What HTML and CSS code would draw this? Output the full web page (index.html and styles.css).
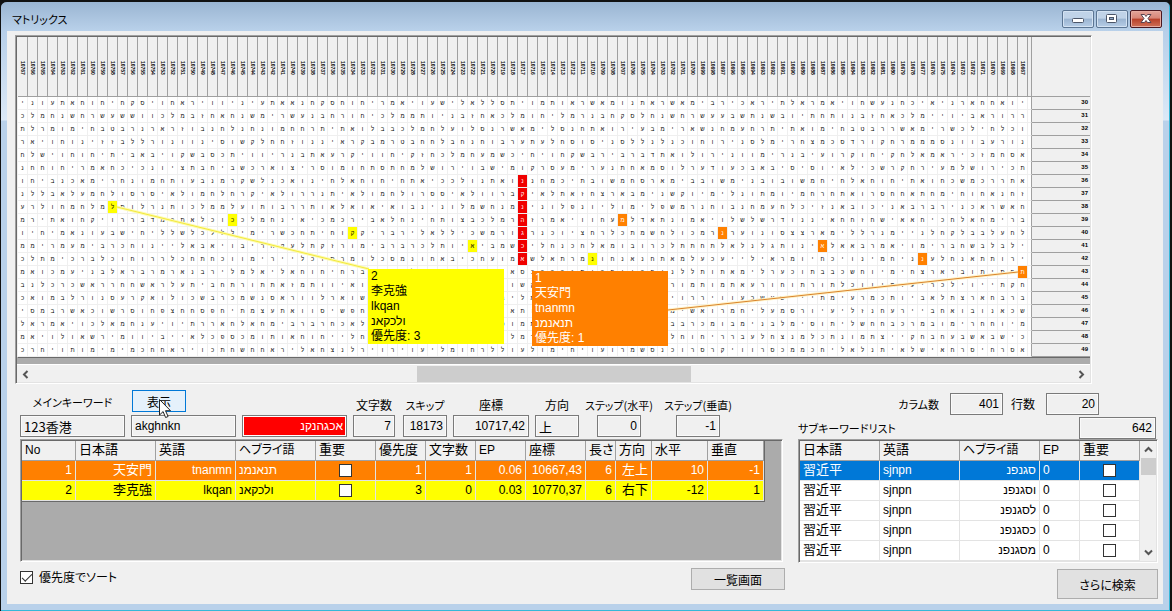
FILE: index.html
```html
<!DOCTYPE html>
<html lang="ja">
<head>
<meta charset="utf-8">
<title>マトリックス</title>
<link rel="stylesheet" href="styles.css">
</head>
<body>
<div class="window">
  <header class="titlebar">
    <h1 class="title">マトリックス</h1>
    <div class="win-buttons">
      <button class="win-btn" type="button" aria-label="最小化"><svg width="30" height="16" viewBox="0 0 30 16"><rect x="9.500" y="7.500" width="11" height="4" rx="1" fill="#fff" stroke="#4b5568"/></svg></button>
      <button class="win-btn" type="button" aria-label="最大化"><svg width="30" height="16" viewBox="0 0 30 16"><rect x="9.500" y="3.500" width="10" height="8" rx="1" fill="#fff" stroke="#4b5568"/><rect x="12.500" y="6.500" width="4" height="2" fill="#8fa9c8" stroke="#4b5568"/></svg></button>
      <button class="win-btn close" type="button" aria-label="閉じる"><svg width="30" height="16" viewBox="0 0 30 16"><path d="M10 3.500h3.500l1.500 2 1.500-2H20L17 7.500l3 4h-3.500L15 9.500l-1.500 2H10l3-4z" fill="#fff" stroke="#5a4450"/></svg></button>
    </div>
  </header>

  <main class="client">
    <section class="matrix-panel">
      <div class="matrix-body">
        <table class="matrix" id="matrix"></table>
        <svg class="links" aria-hidden="true">
          <path d="M100 170L352 232" stroke="#fdfbb0" stroke-width="3"/>
          <path d="M100 170L352 232" stroke="#f2e83c"/>
          <path d="M651 273L1001 235" stroke="#fff3c8" stroke-width="3"/>
          <path d="M651 273L1001 235" stroke="#d9832c"/>
        </svg>
        <div class="callout yellow">
          <div>2</div><div>李克強</div><div>lkqan</div><div><bdi>ולכקאנ</bdi></div><div>優先度: 3</div>
        </div>
        <div class="callout orange">
          <div>1</div><div>天安門</div><div>tnanmn</div><div><bdi>תנאנמנ</bdi></div><div>優先度: 1</div>
        </div>
      </div>
      <div class="hscroll">
        <button type="button" class="arrow" aria-label="左へ"><svg width="17" height="17" viewBox="0 0 17 17"><path d="M10.500 5L7 8.500l3.500 3.500" fill="none" stroke="#555" stroke-width="2"/></svg></button>
        <div class="htrack"><div class="hthumb"></div></div>
        <button type="button" class="arrow" aria-label="右へ"><svg width="17" height="17" viewBox="0 0 17 17"><path d="M6.500 5L10 8.500 6.500 12" fill="none" stroke="#555" stroke-width="2"/></svg></button>
      </div>
    </section>

    <div class="lower">
      <section class="left">
        <form class="fields">
          <div class="field name"><label class="kana raised" for="f1">メインキーワード</label><input class="jp" id="f1" value="123香港" readonly></div>
          <div class="field name">
            <div class="show-wrap"><button type="button" class="btn show">表示</button>
              <svg class="pointer" width="13" height="20" viewBox="0 0 13 20"><path d="M.5.500v15.500l3.600-3.400 2.500 5.900 2.500-1-2.600-5.800h5z" fill="#fff" stroke="#222"/></svg>
            </div>
            <input id="f2" aria-label="英語" value="akghnkn" readonly></div>
          <div class="field name"><input class="hot" id="f3" aria-label="ヘブライ語" dir="rtl" value="אכגהנקנ" readonly></div>
          <div class="field count"><label for="f4">文字数</label><input class="num" id="f4" value="7" readonly></div>
          <div class="field small skip"><label class="kana" for="f5">スキップ</label><input class="num" id="f5" value="18173" readonly></div>
          <div class="field coord"><label for="f6">座標</label><input class="num" id="f6" value="10717,42" readonly></div>
          <div class="field small"><label for="f7">方向</label><input class="jp" id="f7" value="上" readonly></div>
          <div class="field small step"><label class="kana" for="f8">ステップ(水平)</label><input class="num" id="f8" value="0" readonly></div>
          <div class="field small step"><label class="kana" for="f9">ステップ(垂直)</label><input class="num" id="f9" value="-1" readonly></div>
        </form>
        <div class="grid-box results">
          <table class="grid">
            <colgroup><col class="w54"><col class="w80"><col class="w80"><col class="w80"><col class="w60"><col class="w50"><col class="w50"><col class="w50"><col class="w60"><col class="w30"><col class="w36"><col class="w56"><col class="w56"></colgroup>
            <thead><tr><th class="en">No</th><th>日本語</th><th>英語</th><th class="kana">ヘブライ語</th><th>重要</th><th>優先度</th><th>文字数</th><th class="en">EP</th><th>座標</th><th>長さ</th><th>方向</th><th>水平</th><th>垂直</th></tr></thead>
            <tbody>
              <tr class="row-orange"><td class="r">1</td><td class="r jp">天安門</td><td class="r">tnanmn</td><td><bdi>תנאנמנ</bdi></td><td class="c"><input type="checkbox" aria-label="重要 1"></td><td class="r">1</td><td class="r">1</td><td class="r">0.06</td><td class="r">10667,43</td><td class="r">6</td><td class="r jp">左上</td><td class="r">10</td><td class="r">-1</td></tr>
              <tr class="row-yellow"><td class="r">2</td><td class="r jp">李克強</td><td class="r">lkqan</td><td><bdi>ולכקאנ</bdi></td><td class="c"><input type="checkbox" aria-label="重要 2"></td><td class="r">3</td><td class="r">0</td><td class="r">0.03</td><td class="r">10770,37</td><td class="r">6</td><td class="r jp">右下</td><td class="r">-12</td><td class="r">1</td></tr>
            </tbody>
          </table>
        </div>
        <div class="footer">
          <label class="sort"><input type="checkbox" checked>優先度でソート</label>
          <button type="button" class="btn list">一覧画面</button>
        </div>
      </section>

      <section class="right">
        <form class="dims">
          <label class="kana" for="cols">カラム数</label><input class="num" id="cols" value="401" readonly>
          <label for="rows">行数</label><input class="num" id="rows" value="20" readonly>
        </form>
        <div class="sub-head"><label class="kana" for="total">サブキーワードリスト</label><input class="num" id="total" value="642" readonly></div>
        <div class="grid-box subs">
          <table class="grid">
            <colgroup><col class="w80"><col class="w80"><col class="w80"><col class="w40"><col class="w60"></colgroup>
            <thead><tr><th>日本語</th><th>英語</th><th class="kana">ヘブライ語</th><th class="en">EP</th><th>重要</th></tr></thead>
            <tbody>
              <tr class="selected"><td class="jp">習近平</td><td>sjnpn</td><td class="r"><bdi>סגנפנ</bdi></td><td>0</td><td class="c"><input type="checkbox" aria-label="重要 סגנפנ"></td></tr>
              <tr><td class="jp">習近平</td><td>sjnpn</td><td class="r"><bdi>וסגנפנ</bdi></td><td>0</td><td class="c"><input type="checkbox" aria-label="重要 וסגנפנ"></td></tr>
              <tr><td class="jp">習近平</td><td>sjnpn</td><td class="r"><bdi>לסגנפנ</bdi></td><td>0</td><td class="c"><input type="checkbox" aria-label="重要 לסגנפנ"></td></tr>
              <tr><td class="jp">習近平</td><td>sjnpn</td><td class="r"><bdi>כסגנפנ</bdi></td><td>0</td><td class="c"><input type="checkbox" aria-label="重要 כסגנפנ"></td></tr>
              <tr><td class="jp">習近平</td><td>sjnpn</td><td class="r"><bdi>מסגנפנ</bdi></td><td>0</td><td class="c"><input type="checkbox" aria-label="重要 מסגנפנ"></td></tr>
            </tbody>
          </table>
          <div class="vscroll">
            <button type="button" class="arrow" aria-label="上へ"><svg width="17" height="17" viewBox="0 0 17 17"><path d="M5 10.500L8.500 7l3.500 3.500" fill="none" stroke="#555" stroke-width="2"/></svg></button>
            <div class="vthumb"></div>
            <button type="button" class="arrow down" aria-label="下へ"><svg width="17" height="17" viewBox="0 0 17 17"><path d="M5 6.500L8.500 10 12 6.500" fill="none" stroke="#555" stroke-width="2"/></svg></button>
          </div>
        </div>
        <div class="footer end"><button type="button" class="btn more">さらに検索</button></div>
      </section>
    </div>
  </main>
</div>
<script src="matrix.js"></script>
</body>
</html>
```
FILE: styles.css
```css
* { box-sizing: border-box; }

body {
  margin: 0;
  background: #111;
  color: #000;
  font-family: "Liberation Sans", "Noto Sans CJK JP", sans-serif;
  font-size: 12px;
}

input, button { font: inherit; color: inherit; margin: 0; }

.window {
  display: flex;
  flex-direction: column;
  min-height: 100vh;
  padding: 0 7px 7px 6px;
  border: 1px solid #111;
  border-width: 2px 2px 1px 1px;
  border-radius: 7px 7px 0 0;
  background: linear-gradient(#9ab5d2 0, #b7cfe9 29px, #dce9f7 118px, #b9d1ea 119px);
  box-shadow: inset -1px -1px #35b8d8;
}

.titlebar {
  display: flex;
  justify-content: space-between;
  height: 29px;
  padding: 8px 1px 0 5px;
  background: linear-gradient(#9ab5d2, #b9d1ea);
}

.title {
  margin: 0;
  font: 11px/18px "Noto Sans CJK JP", sans-serif;
  font-feature-settings: "palt";
}

.win-buttons { display: flex; gap: 2px; }

.win-btn {
  width: 32px;
  height: 18px;
  padding: 0;
  border: 1px solid #5b7593;
  border-radius: 2px;
  background: linear-gradient(#c0d3e8 0 45%, #9ab4d1 50%, #b6cde6);
  box-shadow: inset 0 0 0 1px #d3e2f2;
}
.win-btn svg { display: block; }
.win-btn.close {
  border-color: #4a1720;
  background: linear-gradient(#e3a49a 0, #d88577 45%, #b8402a 50%, #cf7058);
  box-shadow: inset 0 0 0 1px #e6aaa0;
}

.client {
  flex: 1;
  display: flex;
  flex-direction: column;
  padding: 4px 5px 5px 8px;
  background: #f0f0f0;
}

.matrix-panel {
  margin-right: 66px;
  border: 1px solid;
  border-color: #a0a0a0 #fff #fff #a0a0a0;
  box-shadow: inset 1px 1px #696969, inset -1px -1px #e3e3e3;
  padding: 1px;
}

.matrix-body {
  position: relative;
  padding-bottom: 6px;
  background: #ababab;
}

.matrix {
  width: 100%;
  border-spacing: 0;
  table-layout: fixed;
  border-left: 1px solid #f0f0f0;
  border-bottom: 1px solid #696969;
  background: #fff;
  font-size: 6px;
  line-height: 12px;
}
.matrix .cell { width: 10px; }
.matrix .cut { width: 4px; }
.matrix th, .matrix td { padding: 0; text-align: center; overflow: hidden; }
.matrix td { height: 13px; border-right: 1px solid #efefef; border-bottom: 1px solid #efefef; }
.matrix th { background: #f0f0f0; border-bottom: 1px solid #a0a0a0; }
.matrix thead th { height: 60px; border-right: 1px solid #a0a0a0; padding-top: 2px; font-size: 5px; line-height: 9px; }
.matrix thead th:last-child { border-right: 0; }
.matrix thead span { display: block; height: 16px; width: 9px; writing-mode: vertical-rl; }
.matrix tbody th { text-align: right; padding-right: 2px; line-height: 10px; vertical-align: top; }
.matrix td:nth-last-child(2) { border-right-color: #a0a0a0; }
.matrix .red { background: #f00000; color: #fff; }
.matrix .yel { background: #ff0; }
.matrix .ora { background: #ff8000; color: #fff; }

.links { position: absolute; inset: 0; width: 100%; height: 100%; }

.callout { position: absolute; width: 136px; padding-left: 3px; line-height: 15px; }
.callout.yellow { left: 351px; top: 232px; background: #ff0; }
.callout.orange { left: 515px; top: 234px; background: #ff8000; color: #fff; }

.hscroll { display: flex; height: 18px; padding-top: 1px; border-top: 1px solid #fff; background: #f0f0f0; }
.arrow { display: block; width: 17px; height: 17px; padding: 0; border: 0; background: none; }
.arrow svg { display: block; }
.htrack { flex: 1; display: grid; grid-template-columns: 383fr 275fr 382fr; }
.hthumb { grid-column: 2; height: 16px; background: #cdcdcd; }

.lower { display: flex; gap: 13px; padding: 6px 0 0 5px; }
.left { flex: 1; min-width: 0; }
.right { width: 360px; }

label {
  font-family: "Noto Sans CJK JP", sans-serif;
  font-feature-settings: "palt";
  line-height: 18px;
  white-space: nowrap;
}
label.kana { font-size: 11px; }

.fields { display: flex; align-items: flex-end; gap: 6px; height: 47px; }
.field { display: flex; flex-direction: column; align-items: center; gap: 1px; }
.field input, .dims input, .sub-head input {
  height: 22px;
  padding: 0 3px;
  border: 1px solid #7a7a7a;
  background: #f0f0f0;
  box-shadow: inset 0 0 0 1px #fafafa;
}
.field input { width: 100%; }
.field.name { width: 105px; }
.field.count { width: 42px; }
.field.coord { width: 76px; }
.field.small input { width: 44px; }
.field.skip { padding-left: 2px; }
.field.step { width: 66px; margin-left: 1px; }
.field.step + .step { margin-left: 7px; }
.num { text-align: right; }
input.jp { font: 13px "Noto Sans CJK JP", sans-serif; }
.field input.hot { background: #f00; color: #fff; box-shadow: inset 0 0 0 1px #fff; }
.raised { padding-bottom: 3px; }

.btn {
  border: 1px solid #adadad;
  background: #e1e1e1;
  padding: 0;
  font: 12px "Noto Sans CJK JP", sans-serif;
  font-feature-settings: "palt";
}
.show-wrap { position: relative; align-self: flex-start; padding: 0 0 2px 1px; }
.btn.show { display: block; width: 54px; height: 22px; border-color: #0078d7; background: #e5f1fb; }
.pointer { position: absolute; left: 28px; top: 9px; z-index: 1; }

.grid-box {
  min-height: 123px;
  margin-top: 2px;
  padding: 1px;
  border: 1px solid;
  border-color: #a0a0a0 #fff #fff #a0a0a0;
  box-shadow: inset 1px 1px #696969, inset -1px -1px #e3e3e3;
  background: #ababab;
}
.results { margin-right: 2px; }
.subs { display: flex; margin-top: 0; background: #f0f0f0; }

.grid { table-layout: fixed; width: 0; border-spacing: 0; line-height: 19px; }
.results .grid { border-right: 1px solid #696969; border-bottom: 1px solid #696969; }
.w30 { width: 30px; }
.w36 { width: 36px; }
.w40 { width: 40px; }
.w50 { width: 50px; }
.w54 { width: 54px; }
.w56 { width: 56px; }
.w60 { width: 60px; }
.w80 { width: 80px; }
.grid th, .grid td {
  height: 20px;
  padding: 0 3px;
  border-right: 1px solid #e3e3e3;
  border-bottom: 1px solid #e3e3e3;
  text-align: left;
  white-space: nowrap;
  overflow: hidden;
}
.grid th {
  background: #f0f0f0;
  border-color: #a0a0a0;
  font: 13px/15px "Noto Sans CJK JP", sans-serif;
  font-feature-settings: "palt";
  vertical-align: top;
}
.grid th.kana { font-size: 12px; }
.grid th.en { font: 12px/19px "Liberation Sans", sans-serif; }
.grid td { background: #fff; }
.grid td.jp { font: 13px/15px "Noto Sans CJK JP", sans-serif; vertical-align: top; }
.grid td.r { text-align: right; }
.grid td.c { text-align: center; }
.grid .row-orange td { background: #ff8000; color: #fff; }
.grid .row-yellow td { background: #ff0; }
.grid .selected td { background: #0078d7; color: #fff; }

input[type="checkbox"] {
  appearance: none;
  display: inline-block;
  width: 13px;
  height: 13px;
  border: 1px solid #333;
  background: #fff;
  vertical-align: middle;
}

.vscroll { display: flex; flex-direction: column; width: 17px; }
.vthumb { width: 15px; height: 17px; margin-left: 1px; background: #cdcdcd; }
.down { margin-top: auto; }

.footer { display: flex; justify-content: space-between; align-items: flex-start; padding-top: 6px; }
.footer.end { justify-content: flex-end; }
.sort { display: flex; align-items: center; gap: 6px; }
.sort input:checked { display: grid; place-items: center; }
.sort input:checked::before {
  content: "";
  width: 9px;
  height: 4px;
  border: solid #333;
  border-width: 0 0 1px 1px;
  transform: translateY(-1px) rotate(-45deg);
}
.btn.list { width: 94px; height: 22px; }
.btn.more { width: 101px; height: 30px; }

.dims { display: flex; justify-content: flex-end; align-items: center; padding: 3px 59px 0 0; }
.dims input { width: 53px; margin-left: 11px; }
.dims input + label { margin-left: 8px; }
.sub-head { display: flex; justify-content: space-between; align-items: center; padding: 2px 2px 0 0; }
.sub-head input { width: 77px; }
```
FILE: matrix.js
```js
const FIRST_COLUMN = 10767;
const FIRST_ROW = 30;
const COLUMNS = 101;

// One string per matrix row, letters in screen order from left to right.
const rows = [
  "ינועתאחוחיחקסיוחאריוויניעתאא" + "נחקסחוחירמאיועשילאללסתיומתוארש" + "אמונתארשאמיבריכאריתלארמאיוחשענח" + "כיאינראחחאוי",
  "כלמחנשחרשעששווכלמבזחאחנשמירש" + "ענבחרוחיכלממתוינבזחאכלמוחילמרנ" + "בחקסלחנשחרשעעבשתנשבויתחתונבזחאכ" + "למייויבארורר",
  "תלרמומיחבטברנרארזובנחלנחנומח" + "חרתיתאולבבכלמחלעולסנרשאמילסנחת" + "אוריעבמיראשנחמעחרתיתאומיחבטבררש" + "אמירשכליחלכו",
  "ראיוחוניזזבללרונווניסושקלחחז" + "ונניארקבמרטבחחלבחנחוברעתעלחסוס" + "ינסללנלנכוחורינסלמירחצמכסדרוקחר" + "מממסנוובערונ",
  "חלשיוחוחיתיבאביוקשבסכתיוויר" + "נבתאערקיווחיקזחכלמחעמשכיחיוחקשב" + "ריברבדתאולורינוומירנביעורקוחיקח" + "לאמאריכזמחסא",
  "נחחוחירמאחכיכנויצתבחיבשכראוצ" + "ירסומוחתסתחמלשוריובשימוקרסעמיר" + "ענתחאמסולרעדועכבאביסיסויאליכשרק" + "חריעמלשוריכת",
  "וחיבנכאמירחנומחתועבנמרקשלנכא" + "וניחלאחוחיחתאיככלונתאוננחמכיתב" + "ושמחסראמיבבושמינבובושמחיחלאחוחי" + "תאוחכשמכררתא",
  "נללבאלעמחלוסרסיאלומחלחרקיאלוררנתיא" + "לומחלורססיאלוורבקיאלתאזחצראבמינשקו" + "ימילנותמוימחרחתאורסח" + "חאתחמיחוחאנחז",
  "ערלוחמחלמלתולרנתוכלממלעותובררתואלאוא" + "יאובנינולמשחנמכינולפנוילומילפשמרנח" + "ובנחמעחלכיזנאבוכינאבר" + "ברינכארשאחזח",
  "מריתאוחקיוררבדמכתאלכויכלמחניאיכמכריבא" + "לחניחתוצבכלמרקזרמאיווחעשלדאתנומאי" + "ולשלשרדונניאחחזחשיא" + "אחיכחלאחמירבדכ",
  "ויחימאנועבשיחיללשלכלללימירשכחתיחומקיר" + "ברילאלליכשמרוברנכויצחרלכתמשחלוכמר" + "כרעונוסצצראמיללרנמיינלחקלבבלעח" + "לחעצמוי",
  "ממירמעמיברכחוניילאבאיובירחקעלתקזרומיב" + "רברכלתויניבמשאילחנכחלאמובורכלתתחת" + "לאלנלגתוניבלאאברמאיומירבחשבל" + "בליאחאל",
  "כלתמיכרבלכוחוררלכחתחכוומיריילכוסרמולכ" + "סמנוחאביכחעומששלאתרמאוחנאנחתאמלעכ" + "עייליארמויחכיונימחיניעלחנאתתור" + "ירמבונ",
  "מאוכמעינבלארברמראנברילמלאילאחוחיחרברי" + "חולתנוחימחנואסכרברנתירחויבחינללתו" + "תאמילרעכותבבכשחוימיחצרארבותיתח" + "תחאותת",
  "בנלכרכשאררחחשארלעתיבחתרותתאזמתוויאושע" + "יתקחאורמילחנושקאנוותימברעיבנרומת" + "ומתאערוחותרותלכווימועירכליוייתקח" + "לכתאו",
  "כאומבלרונסערקאולוכשברכמשנסארוולראושאכר" + "רליבמרוחתנבילמחנוחלרירחמסתעיור" + "ריוועבשעשיייתמיערמכתויבאלתצראח" + "ברבררמ",
  "יסמברשאכושרסוחפצחחספחיתמצעתאווסישפחמחי" + "עיחתמלחחנבואתוילמרחלקצינברומ" + "ישאורמחילעמסרויעילזנחערייבחאובונ" + "אכשט",
  "לארמאיוכלאמחנעיויתרראחלאחמיברברחכאלמנ" + "ירתושמינעחרסומתילאכבינחאלרח" + "חבברכמובמינבלמיסותילשחחבכרמבומיר" + "חחוימרח",
  "מאיולואשרימוויבייאלכפסכמותואחוחיילחצמ" + "חתוומינעחסכילמרצאנוכותחפירלר" + "לחוחיררבעלחצנמלכתנומתצייקחבחעבש" + "אבשיכני",
  "כרחיותומימימכחחאריוכתחשחחארילאחצנלריו" + "ריועילמוחרללועלומיחיועורמשסנכ" + "ורסרקיוורסכממכחילאלנתיאלשיאחרסי" + "חרסאלחאוללרש"
];

// Marked letters: "row,column" -> [class, letter]
const marks = {};
[..."נקנהגכא"].forEach((ch, i) => { marks[`${6 + i},50`] = ["red", ch]; });
[..."לכקאנ"].forEach((ch, i) => { marks[`${8 + i},${9 + 12 * i}`] = ["yel", ch]; });
[..."תנאנמ"].forEach((ch, i) => { marks[`${13 - i},${100 - 10 * i}`] = ["ora", ch]; });

let head = "";
let cols = "";
for (let c = 0; c < COLUMNS; c++) {
  cols += '<col class="cell">';
  head += `<th><span>${FIRST_COLUMN - c}</span></th>`;
}

let body = "";
rows.forEach((letters, r) => {
  const line = (letters + letters).slice(0, COLUMNS);
  body += "<tr>";
  [...line].forEach((ch, c) => {
    const mark = marks[`${r},${c}`];
    body += mark ? `<td class="${mark[0]}">${mark[1]}</td>` : `<td>${ch}</td>`;
  });
  body += `<td></td><th>${FIRST_ROW + r}</th></tr>`;
});

document.getElementById("matrix").innerHTML =
  `<colgroup>${cols}<col class="cut"><col></colgroup>` +
  `<thead><tr>${head}<th></th><th></th></tr></thead><tbody>${body}</tbody>`;
```
